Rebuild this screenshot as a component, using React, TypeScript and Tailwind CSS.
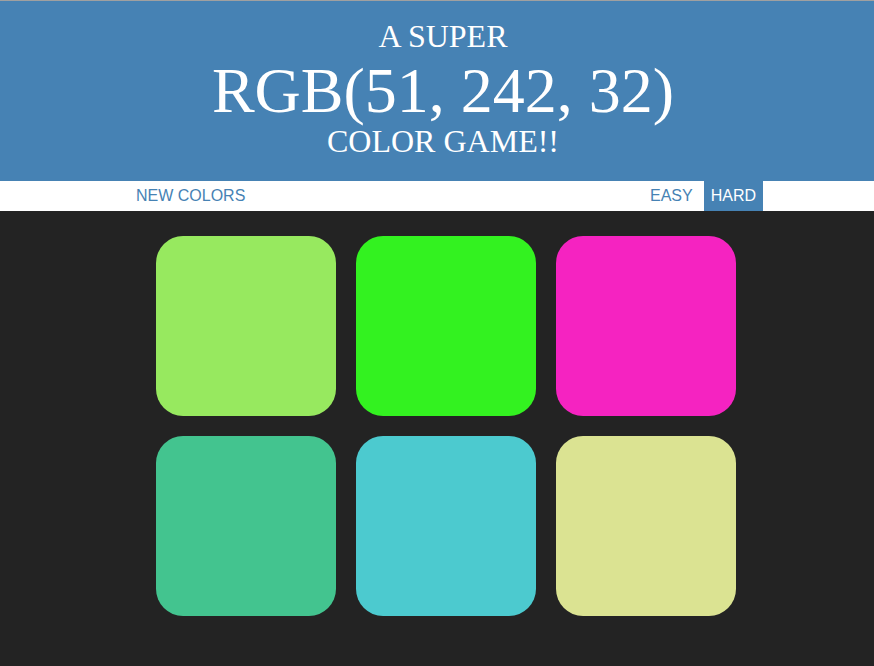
export default function App() {
  const colors = ["#97e95f", "#33f220", "#f523c1", "#43c48f", "#4ccacf", "#dbe392"];
  return (
    <div className="min-h-[666px] bg-[#232323]">
      <div className="h-px bg-[#a0a0a0]" />
      <div className="h-[180px] bg-[#4682b4] text-white text-center pl-[12px]" style={{ fontFamily: '"Liberation Serif", serif' }}>
        <div className="pt-[19px] text-[32px] leading-[32px]">A SUPER</div>
        <div className="text-[64px] leading-[77px]">RGB(51, 242, 32)</div>
        <div className="text-[32px] leading-[32px] -mt-[4px]">COLOR GAME!!</div>
      </div>
      <div className="h-[30px] bg-white flex items-stretch text-[16px] text-[#4682b4]" style={{ fontFamily: '"Liberation Sans", sans-serif' }}>
        <div className="ml-[136px] flex items-center">NEW COLORS</div>
        <div className="ml-auto flex items-center">EASY</div>
        <div className="ml-[11px] mr-[111px] px-[7px] flex items-center bg-[#4682b4] text-white">HARD</div>
      </div>
      <div className="ml-[156px] mt-[25px] grid grid-cols-[180px_180px_180px] gap-[20px]">
        {colors.map((c, i) => (
          <div key={i} className="w-[180px] h-[180px] rounded-[27px]" style={{ backgroundColor: c }} />
        ))}
      </div>
    </div>
  );
}
